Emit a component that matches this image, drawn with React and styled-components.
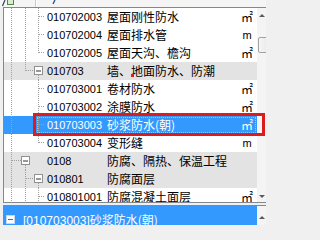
import React from 'react';
import styled, { createGlobalStyle } from 'styled-components';

const GlobalStyle = createGlobalStyle`
  html, body {
    margin: 0;
    padding: 0;
    overflow: hidden;
    background: #f0f0f0;
  }
  #root {
    width: 266px;
    height: 225px;
  }
`;

const Window = styled.div`
  width: 266px;
  height: 225px;
  display: flex;
  flex-direction: column;
  background: #f0f0f0;
  overflow: hidden;
  font-family: "Liberation Sans", "Noto Sans CJK SC", sans-serif;
`;

const Toolbar = styled.div`
  height: 7px;
  flex-shrink: 0;
  display: flex;
  align-items: flex-end;
  gap: 4px;
  padding-left: 1px;
  background: #f5f5f5;
  overflow: hidden;
`;

const ToolIcon = styled.svg`
  width: 14px;
  height: 7px;
  flex-shrink: 0;
`;

const ToolSep = styled.div`
  width: 1px;
  height: 7px;
  margin: 0 10px 0 16px;
  background: #c9c9c9;
  border-right: 1px solid #ffffff;
`;

const TreePanel = styled.div`
  height: 194px;
  flex-shrink: 0;
  margin-left: 3px;
  display: flex;
  background: #ffffff;
  border-top: 1px solid #828790;
  border-left: 1px solid #828790;
  border-bottom: 1px solid #828790;
  overflow: hidden;
`;

const Rows = styled.div`
  flex: 1;
  min-width: 0;
  display: flex;
  flex-direction: column;
`;

const Row = styled.div`
  position: relative;
  height: 18px;
  flex-shrink: 0;
  display: flex;
  align-items: center;
  background: ${p => (p.$selected ? '#3399ff' : p.$group ? '#e3e3e3' : '#ffffff')};
  color: ${p => (p.$selected ? '#ffffff' : '#000000')};
`;

const Guide = styled.svg`
  width: 43px;
  height: 18px;
  flex-shrink: 0;
`;

const Code = styled.span`
  width: 60px;
  flex-shrink: 0;
  font-size: 11px;
  line-height: 18px;
  white-space: nowrap;
`;

const Name = styled.span`
  flex: 1;
  min-width: 0;
  font-family: "Noto Sans CJK SC", sans-serif;
  font-size: 12px;
  line-height: 18px;
  white-space: nowrap;
`;

const Unit = styled.span`
  width: 14px;
  margin-right: 3px;
  flex-shrink: 0;
  text-align: center;
  font-family: ${p => (p.$sq ? '"Noto Sans CJK SC", sans-serif' : '"Liberation Sans", sans-serif')};
  font-size: ${p => (p.$sq ? '12px' : '11px')};
  line-height: 18px;
`;

const FocusRect = styled.div`
  position: absolute;
  left: 33px;
  top: 1px;
  right: 1px;
  bottom: 1px;
  border: 1px dotted rgba(255, 255, 255, 0.5);
  pointer-events: none;
`;

const Highlight = styled.div`
  position: absolute;
  left: 29px;
  top: -3px;
  right: -8px;
  bottom: -2px;
  border: 3px solid #dc1c1c;
  z-index: 2;
  pointer-events: none;
`;

const Mark = styled.span`
  position: absolute;
  left: 127px;
  top: 12px;
  width: 3px;
  height: 3px;
  background: #e01e1e;
`;

const Scrollbar = styled.div`
  width: 9px;
  flex-shrink: 0;
  display: flex;
  flex-direction: column;
  background: #f4f4f4;
`;

const ArrowButton = styled.div`
  height: ${p => p.$h}px;
  flex-shrink: 0;
  display: flex;
  align-items: center;
  padding-left: 2px;
`;

const Arrow = styled.span`
  width: 0;
  height: 0;
  border-left: 3px solid transparent;
  border-right: 3px solid transparent;
  ${p => (p.$down ? 'border-top' : 'border-bottom')}: 3px solid #5a5a5a;
`;

const Track = styled.div`
  flex: 1;
  display: flex;
  flex-direction: column;
`;

const Thumb = styled.div`
  margin-top: 14px;
  margin-left: 1px;
  width: 12px;
  height: 14px;
  border: 1px solid #a2a2a2;
  border-radius: 2px;
  background: linear-gradient(to right, #f6f6f6, #e4e4e4);
`;

const Gap = styled.div`
  height: 2px;
  flex-shrink: 0;
`;

const BottomPanel = styled.div`
  flex: 1;
  margin-left: 3px;
  display: flex;
  background: #ffffff;
  border-top: 1px solid #828790;
  border-left: 1px solid #828790;
  overflow: hidden;
`;

const BottomRow = styled.div`
  flex: 1;
  min-width: 0;
  height: 27px;
  display: flex;
  align-items: center;
  gap: 8px;
  padding-left: 2px;
  background: #3399ff;
  color: #ffffff;
  font-family: "Liberation Sans", "Noto Sans CJK SC", sans-serif;
  font-size: 12px;
  white-space: nowrap;
`;

const BottomName = styled.span`
  font-family: "Noto Sans CJK SC", sans-serif;
  font-size: 12px;
`;

const ExpandBox = styled.svg`
  width: 9px;
  height: 9px;
  flex-shrink: 0;
`;

const L0 = 7;
const L1 = 21;
const L2 = 34;
const LEAF = 41;

const leaf = extra => ({ hook: [L2, LEAF], ...extra });

const rows = [
  leaf({ code: '010702003', name: '屋面刚性防水', unit: '㎡', lines: [[L0, 'full'], [L1, 'full'], [L2, 'full']] }),
  leaf({ code: '010702004', name: '屋面排水管', unit: 'm', lines: [[L0, 'full'], [L1, 'full'], [L2, 'full']] }),
  leaf({ code: '010702005', name: '屋面天沟、檐沟', unit: '㎡', lines: [[L0, 'full'], [L1, 'full'], [L2, 'top']] }),
  { code: '010703', name: '墙、地面防水、防潮', group: true, mark: true, box: L2, hook: [L1, L2 - 4], lines: [[L0, 'full'], [L1, 'top'], [L2, 'bottom']] },
  leaf({ code: '010703001', name: '卷材防水', unit: '㎡', lines: [[L0, 'full'], [L2, 'full']] }),
  leaf({ code: '010703002', name: '涂膜防水', unit: '㎡', lines: [[L0, 'full'], [L2, 'full']] }),
  leaf({ code: '010703003', name: '砂浆防水(朝)', unit: '㎡', selected: true, lines: [[L0, 'full'], [L2, 'full']] }),
  leaf({ code: '010703004', name: '变形缝', unit: 'm', lines: [[L0, 'full'], [L2, 'top']] }),
  { code: '0108', name: '防腐、隔热、保温工程', group: true, box: L1, hook: [L0, L1 - 4], lines: [[L0, 'full'], [L1, 'bottom']] },
  { code: '010801', name: '防腐面层', group: true, box: L2, hook: [L1, L2 - 4], lines: [[L0, 'full'], [L1, 'full'], [L2, 'bottom']] },
  leaf({ code: '010801001', name: '防腐混凝土面层', unit: '㎡', lines: [[L0, 'full'], [L1, 'full'], [L2, 'full']] }),
];

const dot = { stroke: '#a0a0a0', strokeWidth: 1, strokeDasharray: '1 1', fill: 'none' };

function Minus({ x }) {
  return (
    <g>
      <rect x={x - 4 + 0.5} y={4.5} width={8} height={8} fill="#ffffff" stroke="#919191" />
      <line x1={x - 2} y1={9} x2={x + 3} y2={9} stroke="#333333" />
    </g>
  );
}

function TreeGuide({ row }) {
  const span = { full: [0, 18], top: [0, 9], bottom: [row.box ? 13 : 9, 18] };
  return (
    <Guide viewBox="0 0 43 18">
      {row.lines.map(([x, kind]) => (
        <line key={x} x1={x + 0.5} y1={span[kind][0]} x2={x + 0.5} y2={span[kind][1]} {...dot} />
      ))}
      <line x1={row.hook[0] + 1} y1={8.5} x2={row.hook[1]} y2={8.5} {...dot} />
      {row.box && <Minus x={row.box} />}
    </Guide>
  );
}

function ScrollColumn() {
  return (
    <Scrollbar>
      <ArrowButton $h={15}>
        <Arrow />
      </ArrowButton>
      <Track>
        <Thumb />
      </Track>
      <ArrowButton $h={12}>
        <Arrow $down />
      </ArrowButton>
    </Scrollbar>
  );
}

export default function App() {
  return (
    <>
      <GlobalStyle />
      <Window>
        <Toolbar>
          <ToolIcon viewBox="0 0 14 7">
            <line x1="4" y1="0" x2="1.5" y2="6" stroke="#2b3f6b" strokeWidth="1.2" />
            <rect x="6.5" y="-3.5" width="6" height="8" fill="#d8ecd0" stroke="#4d8a3c" />
          </ToolIcon>
          <ToolSep />
          <ToolIcon viewBox="0 0 14 7">
            <line x1="4" y1="0" x2="2" y2="4" stroke="#2a4a9a" strokeWidth="1.3" />
          </ToolIcon>
        </Toolbar>

        <TreePanel>
          <Rows>
            {rows.map(row => (
              <Row key={row.code} $group={row.group} $selected={row.selected}>
                <TreeGuide row={row} />
                <Code>{row.code}</Code>
                <Name>{row.name}</Name>
                {row.unit && <Unit $sq={row.unit === '㎡'}>{row.unit}</Unit>}
                {row.mark && <Mark />}
                {row.selected && <FocusRect />}
                {row.selected && <Highlight />}
              </Row>
            ))}
          </Rows>
          <ScrollColumn />
        </TreePanel>

        <Gap />

        <BottomPanel>
          <BottomRow>
            <ExpandBox viewBox="0 0 9 9">
              <rect x="0.5" y="0.5" width="8" height="8" fill="#ffffff" stroke="#c8d8ea" />
              <line x1="2" y1="4.5" x2="7" y2="4.5" stroke="#3a6ea8" />
            </ExpandBox>
            <span>
              [010703003]<BottomName>砂浆防水(朝)</BottomName>
            </span>
          </BottomRow>
          <Scrollbar>
            <ArrowButton $h={22}>
              <Arrow />
            </ArrowButton>
          </Scrollbar>
        </BottomPanel>
      </Window>
    </>
  );
}
